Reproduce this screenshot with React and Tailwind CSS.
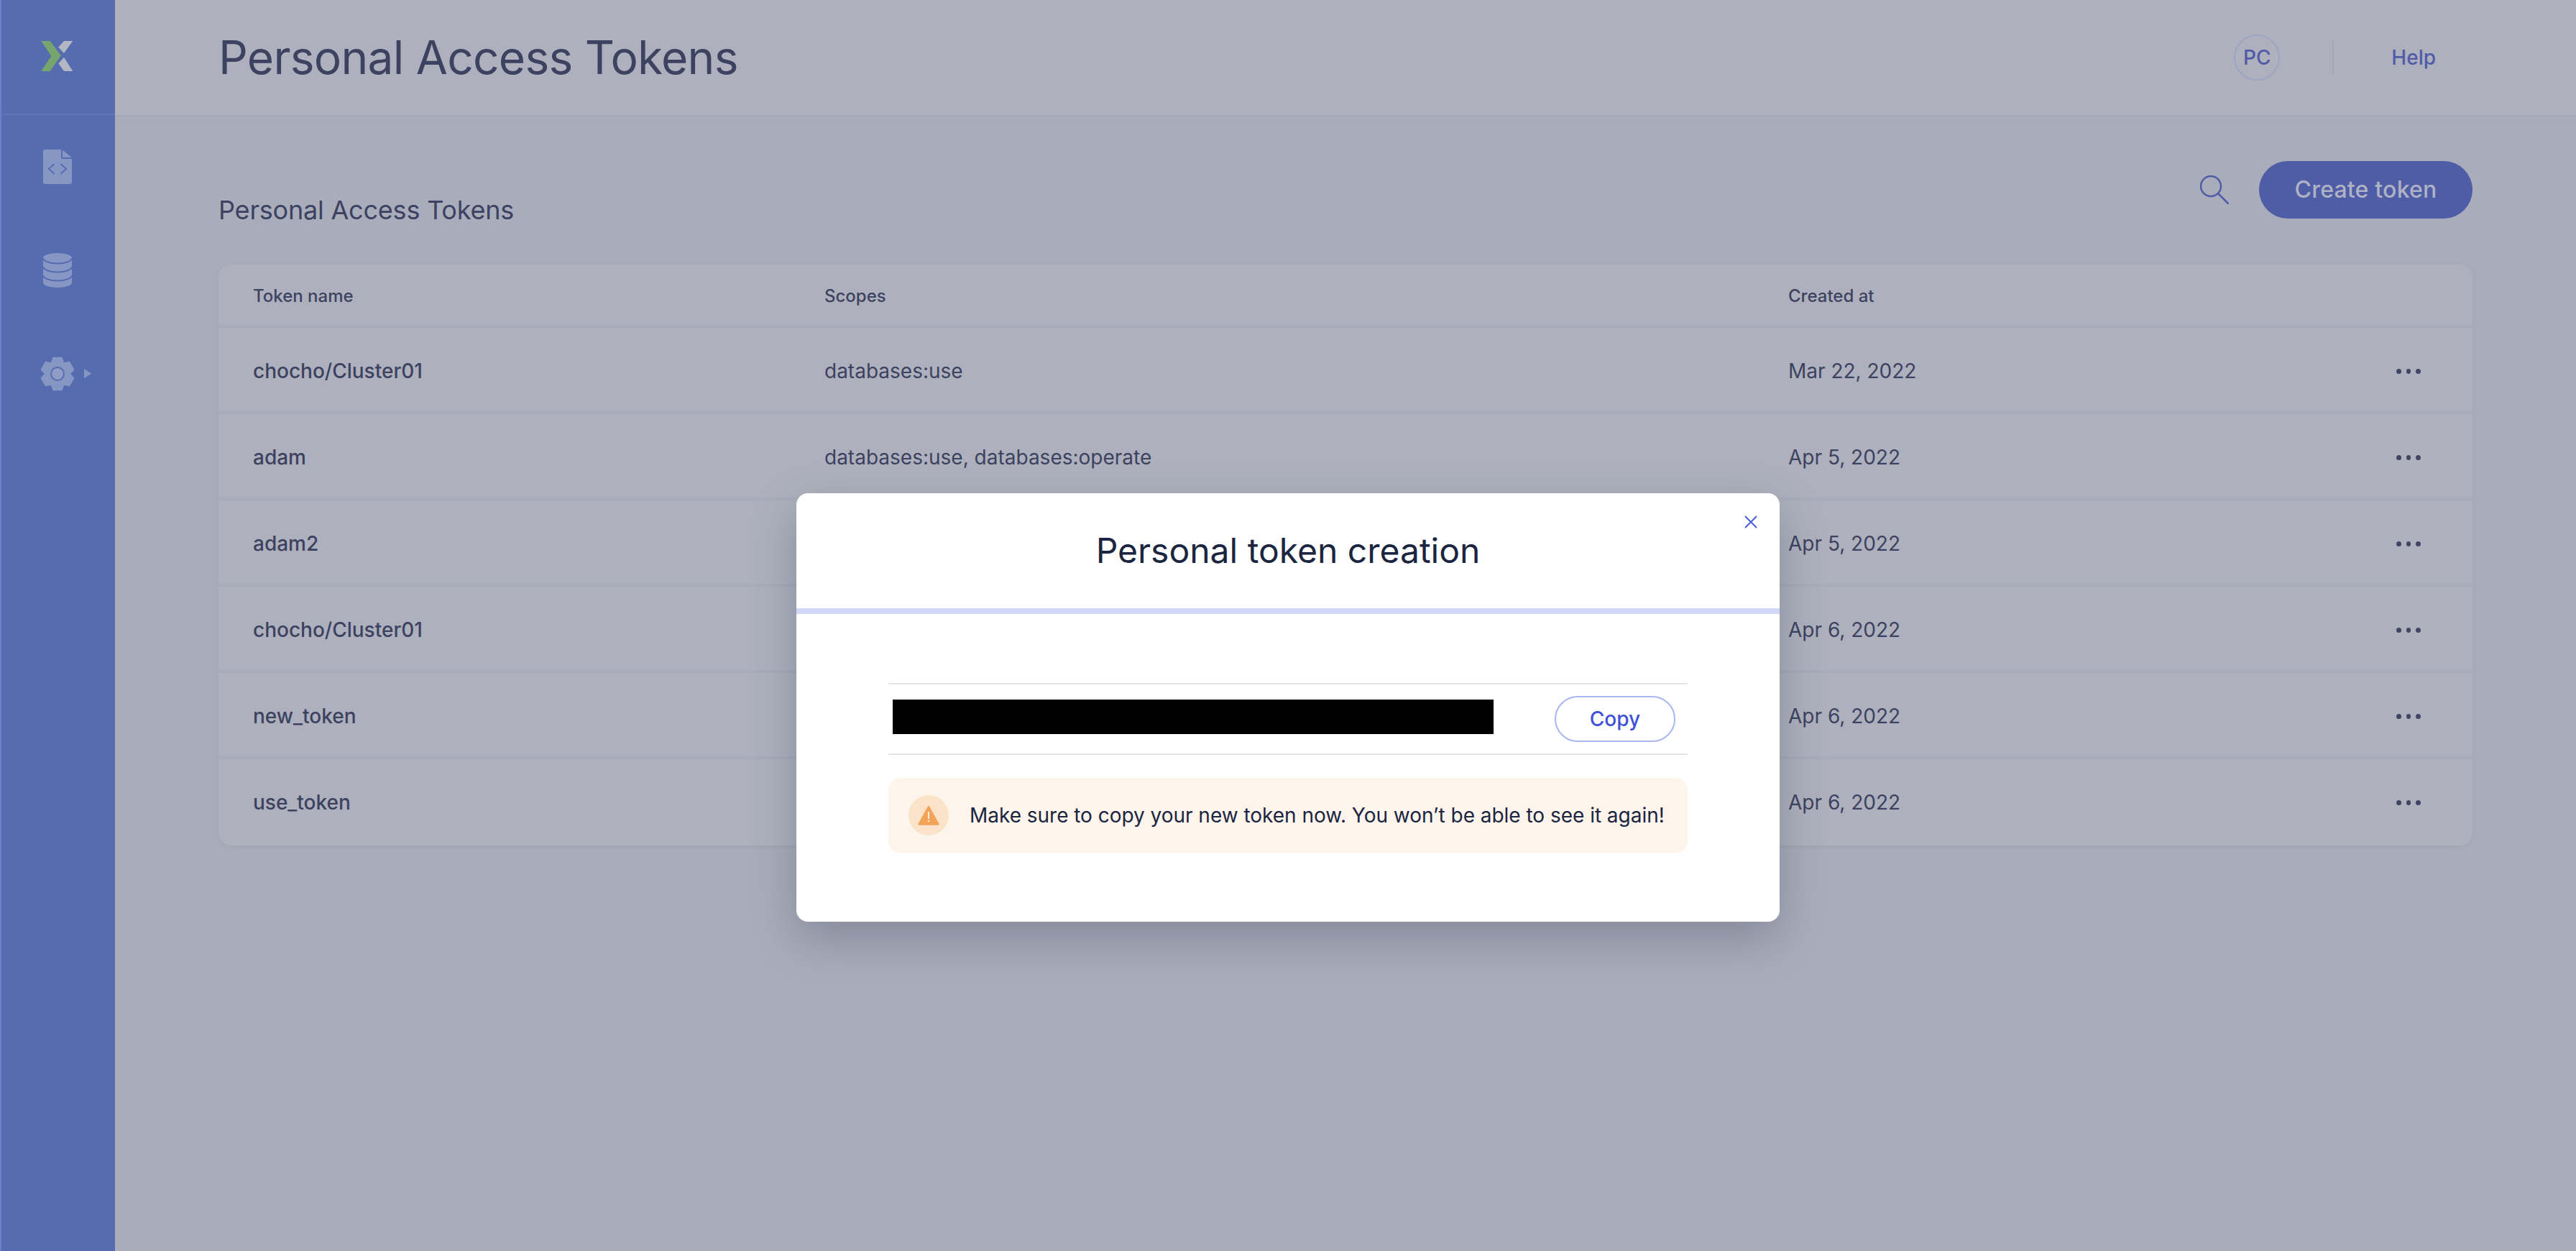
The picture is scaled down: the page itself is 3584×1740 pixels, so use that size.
import React from 'react';

const ROW_GRID = 'grid grid-cols-[795px_1341px_1fr_34px] items-center pl-[48px] pr-[72px]';

const tokens = [
  { name: 'chocho/Cluster01', scopes: 'databases:use', created: 'Mar 22, 2022' },
  { name: 'adam', scopes: 'databases:use, databases:operate', created: 'Apr 5, 2022' },
  { name: 'adam2', scopes: 'databases:use', created: 'Apr 5, 2022' },
  { name: 'chocho/Cluster01', scopes: 'databases:use', created: 'Apr 6, 2022' },
  { name: 'new_token', scopes: 'databases:use', created: 'Apr 6, 2022' },
  { name: 'use_token', scopes: 'databases:use', created: 'Apr 6, 2022' },
];

const Logo = () => (
  <svg width="46" height="44" viewBox="0 0 46 44">
    <path d="M0.3 0H12.7L27.7 20.3L12.7 42H0.3L14.3 21Z" fill="#76a56e" />
    <path d="M24.3 8.7L32 0H44.3L32 17Z" fill="#b3b7c4" />
    <path d="M24.3 31.3L32 22.7L44.3 42H32Z" fill="#b3b7c4" />
  </svg>
);

const FileIcon = () => (
  <svg width="40" height="48" viewBox="0 0 40 48">
    <path d="M3 0H25V11a2 2 0 0 0 2 2H40V45a3 3 0 0 1-3 3H3a3 3 0 0 1-3-3V3a3 3 0 0 1 3-3z" fill="#8797c3" />
    <path d="M27 .5L39.5 11H27z" fill="#8797c3" />
    <path d="M15.7 20L7.7 26.8L15.7 33.7M24.3 20L32.3 26.8L24.3 33.7" fill="none" stroke="#566cb2" strokeWidth="2" />
  </svg>
);

const DatabaseIcon = () => (
  <svg width="40" height="48" viewBox="0 0 40 48">
    <path d="M0 7C0 3 9 0 20 0s20 3 20 7v34c0 4-9 7-20 7S0 45 0 41z" fill="#8797c3" />
    <path d="M0 7c0 4 9 7.5 20 7.5s20-3.500 20-7.500M0 19c0 4 9 7.500 20 7.500s20-3.500 20-7.500M0 31c0 4 9 7.500 20 7.500s20-3.500 20-7.500" fill="none" stroke="#566cb2" strokeWidth="2" />
  </svg>
);

const GearIcon = () => (
  <svg width="48" height="48" viewBox="-24 -24 48 48">
    {[0, 60, 120, 180, 240, 300].map((deg) => (
      <path key={deg} d="M-6 -22.500H6L9.500 -12H-9.500Z" fill="#8797c3" stroke="#8797c3" strokeWidth="1.500" strokeLinejoin="round" transform={`rotate(${deg})`} />
    ))}
    <circle r="17" fill="#8797c3" />
    <circle r="9" fill="#8e9dc6" stroke="#566cb2" strokeWidth="2" />
  </svg>
);

const SearchIcon = () => (
  <svg width="40" height="40" viewBox="0 0 40 40" fill="none" stroke="#4f5ba8" strokeWidth="2.500" strokeLinecap="round">
    <circle cx="15" cy="15" r="14" />
    <path d="M25 25L39 39" />
  </svg>
);

const WarningIcon = () => (
  <svg width="30" height="28" viewBox="0 0 30 28">
    <path d="M15 2L28.500 26.500H1.500Z" fill="#f4a459" stroke="#f4a459" strokeWidth="2.500" strokeLinejoin="round" />
    <path d="M15 9V19" stroke="#fdf4ec" strokeWidth="1.800" />
    <circle cx="15" cy="22" r="1.200" fill="#fdf4ec" />
  </svg>
);

const Dots = () => (
  <div className="flex items-center gap-[7px]">
    <span className="h-[7px] w-[7px] rounded-full bg-[#3f4563]" />
    <span className="h-[7px] w-[7px] rounded-full bg-[#3f4563]" />
    <span className="h-[7px] w-[7px] rounded-full bg-[#3f4563]" />
  </div>
);

const App = () => {
  return (
    <div className="relative flex h-[1740px] w-[3584px] overflow-hidden bg-[#a9adbb] font-['Inter',sans-serif] text-[#3c4260]">
      {/* Sidebar */}
      <aside className="flex h-full w-[160px] shrink-0 flex-col border-l-2 border-[#6a80c8] bg-[#566cb0]">
        <div className="flex h-[160px] items-center justify-center border-b-2 border-[#5f75b9] pr-[2px]">
          <Logo />
        </div>
        <nav className="flex flex-col">
          <div className="mt-[48px] flex justify-center pr-[2px]"><FileIcon /></div>
          <div className="mt-[96px] flex justify-center pr-[2px]"><DatabaseIcon /></div>
          <div className="relative mt-[96px] flex justify-center pr-[2px]">
            <GearIcon />
            <svg className="absolute left-[115px] top-[17px]" width="10" height="13" viewBox="0 0 10 13">
              <path d="M0 0L10 6.500L0 13Z" fill="#8797c3" />
            </svg>
          </div>
        </nav>
      </aside>

      <main className="flex min-w-0 flex-1 flex-col">
        {/* Top bar */}
        <header className="flex h-[160px] shrink-0 items-center justify-between bg-[#aeb1bd] pl-[144px] pr-[195px] shadow-[0_2px_0_#a6a9b8]">
          <h1 className="text-[64px] font-normal leading-[80px] tracking-[-0.73px]">Personal Access Tokens</h1>
          <div className="flex items-center">
            <div className="flex h-[64px] w-[64px] items-center justify-center rounded-full border-2 border-[#9da4c3] text-[28px] font-medium text-[#4f5ba8]">PC</div>
            <div className="ml-[73px] h-[48px] w-[2px] bg-[#a3a6b6]" />
            <a className="ml-[80px] text-[28px] font-medium text-[#4f5ba8]">Help</a>
          </div>
        </header>

        <section className="flex flex-col px-[144px]">
          <div className="mt-[64px] flex h-[80px] items-start justify-between">
            <h2 className="pt-[46px] text-[36px] font-normal leading-[44px] tracking-[-0.2px]">Personal Access Tokens</h2>
            <div className="flex items-center gap-[42px]">
              <SearchIcon />
              <button className="flex h-[80px] w-[297px] items-center justify-center rounded-full bg-[#4f5ca6] text-[32px] font-medium tracking-[0.2px] text-[#afb2c4]">Create token</button>
            </div>
          </div>

          {/* Token table */}
          <div className="mt-[64px] overflow-hidden rounded-[16px] bg-[#aeb1bd] shadow-[0_2px_6px_rgba(60,66,96,0.08)]">
            <div className={`${ROW_GRID} h-[88px] text-[24px] font-medium shadow-[inset_0_-4px_0_#a9acba]`}>
              <span>Token name</span>
              <span>Scopes</span>
              <span>Created at</span>
              <span />
            </div>
            {tokens.map((t, i) => (
              <div key={i} className={`${ROW_GRID} h-[120px] text-[28px] shadow-[inset_0_-4px_0_#a9acba] last:shadow-none`}>
                <span className="font-medium">{t.name}</span>
                <span>{t.scopes}</span>
                <span>{t.created}</span>
                <Dots />
              </div>
            ))}
          </div>
        </section>
      </main>

      {/* Token created modal */}
      <div className="absolute inset-0 flex items-start justify-center pt-[686px]">
        <div className="relative h-[596px] w-[1368px] rounded-[16px] bg-white shadow-[0_24px_64px_rgba(40,44,70,0.28)]">
          <div className="flex h-[168px] items-center justify-center border-b-[8px] border-[#d0d8f8]">
            <h3 className="text-[48px] font-normal text-[#1b2540]">Personal token creation</h3>
          </div>
          <button className="absolute right-[30px] top-[30px] text-[#4a5ce0]">
            <svg width="20" height="20" viewBox="0 0 20 20" fill="none" stroke="currentColor" strokeWidth="2">
              <path d="M2 2L18 18M18 2L2 18" />
            </svg>
          </button>

          <div className="px-[128px] pt-[96px]">
            <div className="flex h-[100px] items-start justify-between border-y-2 border-[#e3e3e6] pl-[6px] pr-[17px]">
              <div className="mt-[21px] h-[48px] w-[836px] bg-black" />
              <button className="mt-[16px] flex h-[64px] w-[168px] items-center justify-center rounded-full border-2 border-[#a9b6f5] text-[28px] font-medium text-[#3f51d8]">Copy</button>
            </div>
            <div className="mt-[32px] flex h-[104px] items-center gap-[29px] rounded-[16px] bg-[#fdf4ec] pl-[28px]">
              <div className="flex h-[56px] w-[56px] items-center justify-center rounded-full bg-[#fae3c9]">
                <WarningIcon />
              </div>
              <p className="text-[28px] tracking-[-0.03px] text-[#1b2540]">Make sure to copy your new token now. You won’t be able to see it again!</p>
            </div>
          </div>
        </div>
      </div>
    </div>
  );
};

export default App;
